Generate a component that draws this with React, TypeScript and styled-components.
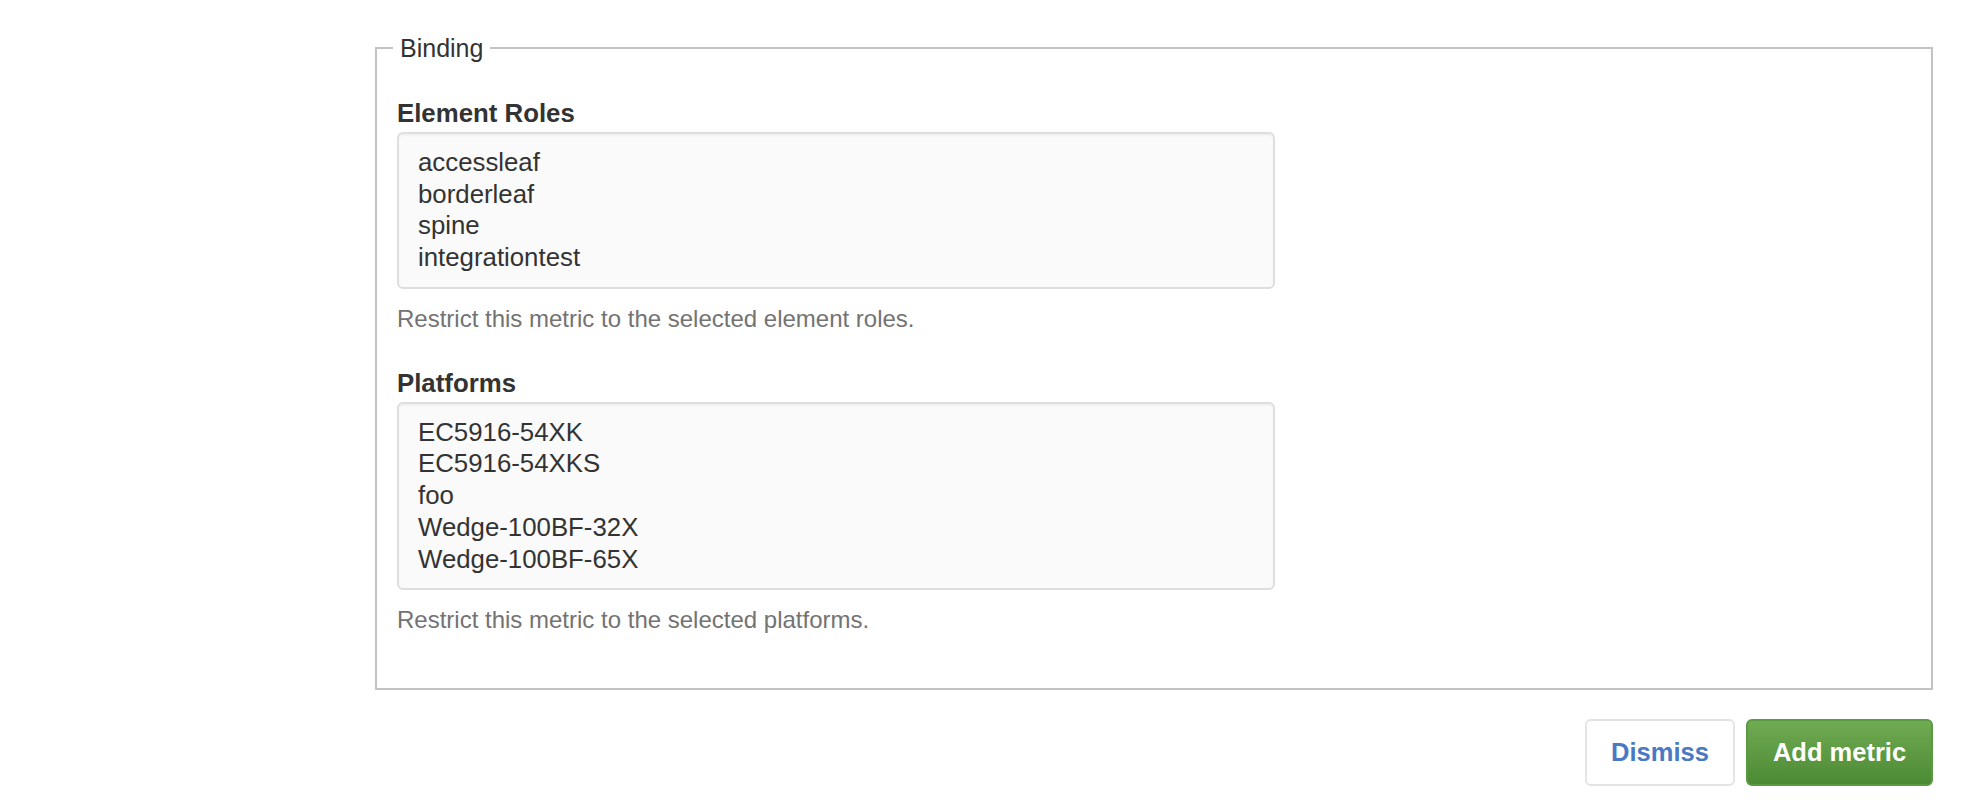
import React from "react";
import styled, { createGlobalStyle } from "styled-components";

const GlobalStyle = createGlobalStyle`
  html, body {
    margin: 0;
    padding: 0;
    background: #ffffff;
  }
  body {
    font-family: "Liberation Sans", Arial, Helvetica, sans-serif;
    color: #333333;
  }
`;

const Page = styled.div`
  width: 1972px;
  height: 800px;
  box-sizing: border-box;
  padding: 31px 39px 0 375px;
  overflow: hidden;
`;

const Form = styled.form`
  width: 1558px;
  display: flex;
  flex-direction: column;
`;

const Fieldset = styled.fieldset`
  margin: 0;
  min-width: 0;
  border: 2px solid #c3c3c3;
  padding: 31px 20px 51px 20px;
  display: flex;
  flex-direction: column;
`;

const Legend = styled.legend`
  margin-left: -4px;
  padding: 0 7px;
  font-size: 25px;
  line-height: 34px;
  color: #333333;
`;

const Group = styled.div<{ $gap?: number }>`
  display: flex;
  flex-direction: column;
  margin-top: ${(p) => p.$gap ?? 0}px;
`;

const Label = styled.label`
  font-size: 25.8px;
  font-weight: 700;
  line-height: 34px;
  margin-bottom: 2px;
  color: #333333;
`;

const ListBox = styled.div`
  width: 878px;
  box-sizing: border-box;
  border: 2px solid #dedede;
  border-radius: 6px;
  background: #fafafa;
  box-shadow: inset 0 2px 2px rgba(0, 0, 0, 0.04);
  padding: 13px 19px;
  display: flex;
  flex-direction: column;
`;

const Option = styled.div`
  font-size: 25.8px;
  line-height: 31.7px;
  height: 31.7px;
  color: #333333;
  white-space: nowrap;
`;

const Help = styled.p`
  margin: 13px 0 0 0;
  font-size: 24px;
  line-height: 34px;
  color: #737373;
`;

const Actions = styled.div`
  display: flex;
  justify-content: flex-end;
  gap: 11px;
  margin-top: 29px;
`;

const Button = styled.button<{ $variant: "default" | "success" }>`
  height: 67px;
  box-sizing: border-box;
  border-radius: 6px;
  font-family: "Liberation Sans", Arial, Helvetica, sans-serif;
  font-size: 25.5px;
  font-weight: 700;
  cursor: pointer;
  padding: 0;
  width: ${(p) => (p.$variant === "success" ? "187px" : "150px")};
  border: 2px solid ${(p) => (p.$variant === "success" ? "#5a9a43" : "#e4e4e4")};
  color: ${(p) => (p.$variant === "success" ? "#ffffff" : "#4a78c2")};
  background: ${(p) =>
    p.$variant === "success"
      ? "linear-gradient(to bottom, #70ab52 0%, #4c8a34 100%)"
      : "#ffffff"};
`;

const roles = ["accessleaf", "borderleaf", "spine", "integrationtest"];
const platforms = [
  "EC5916-54XK",
  "EC5916-54XKS",
  "foo",
  "Wedge-100BF-32X",
  "Wedge-100BF-65X",
];

export default function App() {
  return (
    <>
      <GlobalStyle />
      <Page>
        <Form onSubmit={(e) => e.preventDefault()}>
          <Fieldset>
            <Legend>Binding</Legend>
            <Group>
              <Label>Element Roles</Label>
              <ListBox role="listbox" aria-multiselectable="true">
                {roles.map((r) => (
                  <Option key={r} role="option">
                    {r}
                  </Option>
                ))}
              </ListBox>
              <Help>Restrict this metric to the selected element roles.</Help>
            </Group>
            <Group $gap={30}>
              <Label>Platforms</Label>
              <ListBox role="listbox" aria-multiselectable="true">
                {platforms.map((p) => (
                  <Option key={p} role="option">
                    {p}
                  </Option>
                ))}
              </ListBox>
              <Help>Restrict this metric to the selected platforms.</Help>
            </Group>
          </Fieldset>
          <Actions>
            <Button type="button" $variant="default">
              Dismiss
            </Button>
            <Button type="submit" $variant="success">
              Add metric
            </Button>
          </Actions>
        </Form>
      </Page>
    </>
  );
}
